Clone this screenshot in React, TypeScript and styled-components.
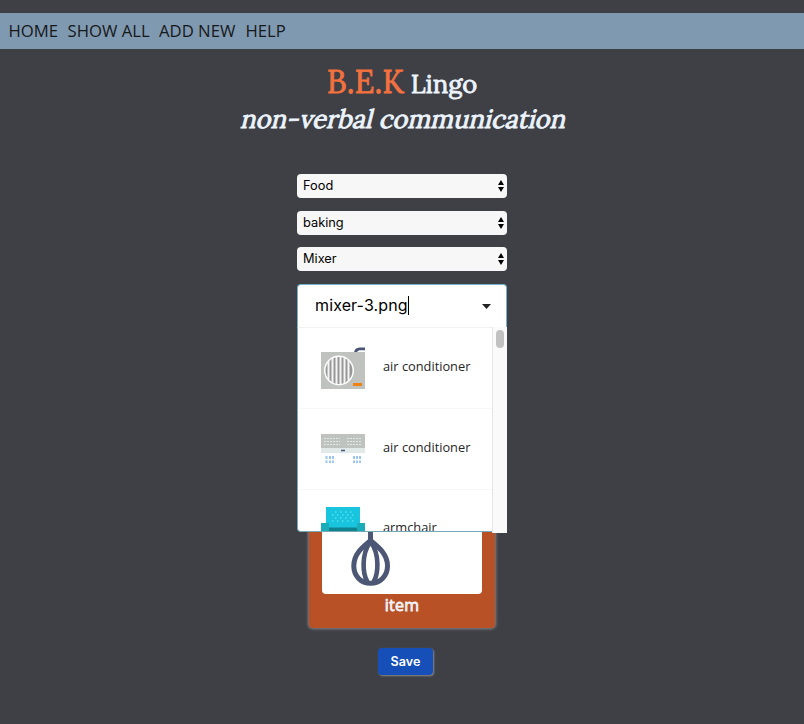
import React from "react";
import styled, { createGlobalStyle } from "styled-components";

const GlobalStyle = createGlobalStyle`
  * { box-sizing: border-box; }
  body { margin: 0; background: #3f4045; font-family: "Open Sans", sans-serif; }
`;

const Page = styled.div`
  height: 724px;
  padding-top: 13px;
  overflow: hidden;
  background: #3f4045;
`;

const Nav = styled.nav`
  height: 36px;
  padding-left: 8.5px;
  display: flex;
  align-items: center;
  gap: 10px;
  background: #7f99b0;
`;

const NavLink = styled.a<{ $width: number }>`
  width: ${(p) => p.$width}px;
  color: #17181a;
  font-size: 16.7px;
  line-height: 22px;
  white-space: nowrap;
`;

const Header = styled.header`
  height: 125px;
  padding-top: 13px;
  display: flex;
  flex-direction: column;
  align-items: center;
  color: #ecf4fd;
  font-family: Lora, "Liberation Serif", serif;
  white-space: nowrap;
`;

const Title = styled.h1`
  margin: 0;
  height: 40px;
  display: flex;
  align-items: baseline;
  gap: 6.5px;
  line-height: 39px;
  font-size: 25.6px;
  font-weight: 400;
  -webkit-text-stroke: 0.8px currentColor;
`;

const Brand = styled.span`
  color: #f3713f;
  font-size: 32px;
  -webkit-text-stroke: 0.8px currentColor;
`;

const Tagline = styled.h2`
  margin: 0;
  height: 34px;
  padding-left: 6px;
  line-height: 34px;
  font-size: 25.6px;
  font-weight: 400;
  transform: skewX(-14deg);
  -webkit-text-stroke: 0.9px currentColor;
`;

const Form = styled.form`
  width: 210px;
  margin: 0 auto;
  display: flex;
  flex-direction: column;
  align-items: center;
`;

const SelectBox = styled.div<{ $gap: number }>`
  width: 210px;
  height: 24px;
  margin-bottom: ${(p) => p.$gap}px;
  padding: 0 3px 0 6px;
  display: flex;
  align-items: center;
  justify-content: space-between;
  border-radius: 4px;
  background: #f7f7f7;
  color: #000;
  font: 12.8px/24px Inter, sans-serif;
  svg { display: block; }
`;

const SelectLabel = styled.span`
  height: 24px;
`;

const Combo = styled.div`
  position: relative;
  width: 210px;
  height: 43px;
  padding: 0 15px 0 17px;
  display: flex;
  align-items: center;
  justify-content: space-between;
  border: 1px solid #75b1c9;
  border-bottom: 0;
  border-radius: 4px 4px 0 0;
  background: #fff;
`;

const Query = styled.div`
  height: 19px;
  margin-bottom: 2px;
  display: flex;
  align-items: center;
  border-right: 1px solid #000;
  color: #000;
  font: 16px/19px Inter, sans-serif;
  letter-spacing: 0.12px;
  white-space: nowrap;
`;

const Menu = styled.div`
  position: absolute;
  z-index: 2;
  top: 42px;
  left: -1px;
  width: 210px;
  height: 206px;
  display: flex;
`;

const Options = styled.div`
  width: 195px;
  height: 205px;
  overflow: hidden;
  border: 1px solid #75a9b9;
  border-top-color: #f1f1f1;
  border-right: 0;
  border-radius: 0 0 0 4px;
  background: #fff;
`;

const Option = styled.div`
  height: 81px;
  padding-left: 23px;
  display: flex;
  align-items: center;
  gap: 18px;
  border-bottom: 1px solid #f8f8f8;
  color: #252525;
  font-size: 12.8px;
  line-height: 18px;
  white-space: nowrap;
  svg { display: block; flex: none; }
  &:last-child { height: 79px; }
`;

const OptionName = styled.span`
  height: 22px;
`;

const ScrollTrack = styled.div`
  width: 15px;
  height: 206px;
  padding: 3px 0 0 3px;
  border-left: 1px solid #e5e5e5;
  background: #fafafa;
`;

const ScrollThumb = styled.div`
  width: 8px;
  height: 18px;
  border-radius: 4px;
  background: #c1c1c1;
`;

const Card = styled.div`
  width: 186px;
  height: 188px;
  margin: 113px 0 20px;
  padding: 0 0 34px 13px;
  display: flex;
  flex-direction: column;
  border-radius: 4px;
  background: #b95126;
  box-shadow: 0 0 3px 1px #85858a;
`;

const Preview = styled.div`
  width: 160px;
  height: 154px;
  flex: none;
  padding: 86px 0 0 29px;
  border-radius: 0 0 4px 4px;
  background: #fff;
  svg { display: block; }
`;

const CardTitle = styled.div`
  width: 160px;
  height: 23px;
  flex: none;
  color: #f2f3f8;
  font-size: 16px;
  font-weight: 400;
  letter-spacing: 0.2px;
  line-height: 22px;
  text-align: center;
  -webkit-text-stroke: 0.8px currentColor;
`;

const SaveButton = styled.button`
  width: 55px;
  height: 27px;
  margin-left: 7px;
  padding: 0;
  border: 0;
  border-radius: 4px;
  background: #164fb8;
  box-shadow: 1px 1px 2px #89898d;
  color: #fff;
  font: 600 12.6px/27px Inter, sans-serif;
`;

const UpDown = () => (
  <svg width="6" height="12" viewBox="0 0 6 12">
    <path d="M3 0 6 5H0ZM0 7H6L3 12Z" fill="#000" />
  </svg>
);

const Conditioner = () => (
  <svg width="44" height="44" viewBox="0 0 44 44">
    <path d="M34.5 8V6.5Q35 3 38.5 2.8H44" fill="none" stroke="#485577" strokeWidth="2.8" />
    <rect y="6" width="44" height="37" fill="#bfc2be" />
    <circle cx="18" cy="24.5" r="15" fill="#fff" />
    <circle cx="18" cy="24.5" r="13.5" fill="#969896" />
    <path d="M7.5 15V34M11.5 12V37M15.5 11V38M19.5 11V38M23.5 12V37M27.5 14V35" stroke="#f5f5f5" strokeWidth="2" />
    <rect x="32" y="37" width="9" height="3" fill="#ed8217" />
  </svg>
);

const WallUnit = () => (
  <svg width="44" height="44" viewBox="0 0 44 44">
    <rect y="7" width="44" height="14" fill="#bfc3bf" />
    <rect y="21" width="44" height="5" fill="#e1e9e9" />
    <path d="M3 11.5H19M3 14.5H19M3 17.5H19M26 11.5H41M26 14.5H41M26 17.5H41" stroke="#e4e7e3" strokeWidth="1" strokeDasharray="2 1" />
    <path d="M20 23.5H24" stroke="#485577" strokeWidth="1.5" />
    <path d="M5.5 29V32M9 29V32M12 29V32M5.5 33.5V36M9 33.5V36M12 33.5V36M33 29V32M36 29V32M39 29V32M33 33.5V36M36 33.5V36M39 33.5V36" stroke="#9dc5ee" strokeWidth="2" />
  </svg>
);

const Armchair = () => (
  <svg width="44" height="44" viewBox="0 0 44 44">
    <path d="M5 0H39V21H5Z" fill="#19c4df" />
    <path d="M8 20.5H36V29H8Z" fill="#11838f" />
    <path d="M0 16H8V40H0ZM36 16H44V40H36Z" fill="#1bacba" />
    <g stroke="#52e2ec" strokeWidth="1.3">
      <path d="M14 5H32M11 8H34M14 11H32M11 14H34" strokeDasharray="1.5 3.5" />
    </g>
  </svg>
);

const Whisk = () => (
  <svg width="40" height="62" viewBox="0 0 40 62">
    <g fill="none" stroke="#4c5776" strokeWidth="5">
      <path d="M19.5 0V18" />
      <path d="M19.5 14.5C11.5 21 2.8 28 2.8 40C2.8 50 10 57.300 19.5 57.300S36.500 50 36.500 40C36.500 28 27.500 21 19.500 14.500Z" />
      <path d="M18.5 17C11 28 11 47 16.500 56M20.500 17C28 28 28 47 22.500 56" strokeWidth="4.6" />
    </g>
  </svg>
);

const links = [
  { label: "HOME", width: 49 },
  { label: "SHOW ALL", width: 81.5 },
  { label: "ADD NEW", width: 76.5 },
  { label: "HELP", width: 40 },
];

const selects = [
  { value: "Food", gap: 13 },
  { value: "baking", gap: 12 },
  { value: "Mixer", gap: 13 },
];

const options = [
  { name: "air conditioner", Icon: Conditioner },
  { name: "air conditioner", Icon: WallUnit },
  { name: "armchair", Icon: Armchair },
];

export default function App() {
  return (
    <Page>
      <GlobalStyle />
      <Nav>
        {links.map((l) => (
          <NavLink key={l.label} $width={l.width}>{l.label}</NavLink>
        ))}
      </Nav>
      <Header>
        <Title><Brand>B.E.K</Brand><span>Lingo</span></Title>
        <Tagline>non-verbal communication</Tagline>
      </Header>
      <Form>
        {selects.map((s) => (
          <SelectBox key={s.value} $gap={s.gap}>
            <SelectLabel>{s.value}</SelectLabel>
            <UpDown />
          </SelectBox>
        ))}
        <Combo>
          <Query>mixer-3.png</Query>
          <svg width="9" height="5" viewBox="0 0 9 5"><path d="M0 0H9L4.5 5Z" fill="#222" /></svg>
          <Menu>
            <Options>
              {options.map(({ name, Icon }, i) => (
                <Option key={i}>
                  <Icon />
                  <OptionName>{name}</OptionName>
                </Option>
              ))}
            </Options>
            <ScrollTrack><ScrollThumb /></ScrollTrack>
          </Menu>
        </Combo>
        <Card>
          <Preview><Whisk /></Preview>
          <CardTitle>item</CardTitle>
        </Card>
        <SaveButton type="button">Save</SaveButton>
      </Form>
    </Page>
  );
}
